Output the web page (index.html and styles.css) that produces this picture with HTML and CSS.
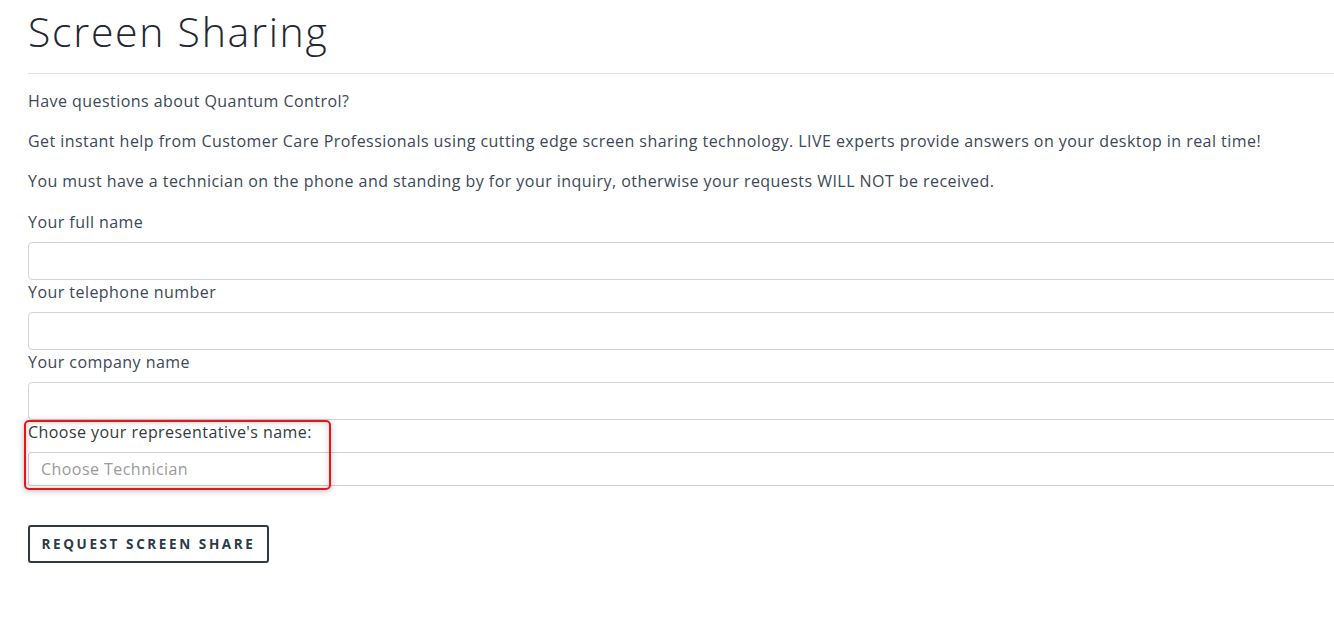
FILE: index.html
```html
<!DOCTYPE html>
<html lang="en">
<head>
<meta charset="utf-8">
<title>Screen Sharing</title>
<link rel="stylesheet" href="styles.css">
</head>
<body>
<main class="page">
  <h1 class="title">Screen Sharing</h1>
  <hr class="rule">
  <p class="text first">Have questions about Quantum Control?</p>
  <p class="text">Get instant help from Customer Care Professionals using cutting edge screen sharing technology. LIVE experts provide answers on your desktop in real time!</p>
  <p class="text">You must have a technician on the phone and standing by for your inquiry, otherwise your requests WILL NOT be received.</p>
  <form class="form">
    <label class="label" for="fullname">Your full name</label>
    <input class="field" id="fullname" type="text">
    <label class="label" for="phone">Your telephone number</label>
    <input class="field" id="phone" type="text">
    <label class="label" for="company">Your company name</label>
    <input class="field" id="company" type="text">
    <div class="rep-group">
      <label class="label label-dark" for="rep">Choose your representative's name:</label>
      <select class="select" id="rep">
        <option>Choose Technician</option>
      </select>
      <span class="highlight"></span>
    </div>
    <button class="btn" type="button">Request Screen Share</button>
  </form>
</main>
</body>
</html>
```

FILE: styles.css
```css
html, body {
  margin: 0;
  padding: 0;
  overflow: hidden;
  background: #fff;
}
body {
  font-family: "Open Sans", "Liberation Sans", sans-serif;
  color: #3b4858;
}
.page {
  width: 1320px;
  padding: 0 0 0 28px;
  display: flex;
  flex-direction: column;
}
.title {
  margin: 6px 0 0 0;
  font-size: 41px;
  line-height: 50px;
  font-weight: 300;
  color: #1f2832;
  letter-spacing: 1.7px;
}
.rule {
  margin: 17px 0 0 0;
  border: 0;
  border-top: 1px solid #e5e5e5;
  height: 0;
}
.text {
  margin: 16px 0 0 0;
  font-size: 16px;
  line-height: 24px;
  letter-spacing: 0.45px;
}
.text.first {
  margin-top: 15px;
}
.form {
  display: flex;
  flex-direction: column;
  margin-top: 17px;
}
.label {
  display: block;
  font-size: 16px;
  line-height: 24px;
  letter-spacing: 0.45px;
  margin-bottom: 8px;
}
.label-dark {
  color: #333a42;
}
.field {
  height: 38px;
  box-sizing: border-box;
  border: 1px solid #ced4da;
  border-radius: 4px;
  padding: 6px 12px;
  font: inherit;
  width: 100%;
  margin: 0;
}
.rep-group {
  position: relative;
  display: flex;
  flex-direction: column;
}
.select {
  height: 34px;
  box-sizing: border-box;
  border: 1px solid #cfcfcf;
  border-radius: 3px;
  padding: 0 12px;
  font-family: inherit;
  font-size: 16px;
  letter-spacing: 0.45px;
  color: #9a9a9a;
  background: #fff;
  -webkit-appearance: none;
  appearance: none;
  width: 100%;
  margin: 0;
}
.highlight {
  position: absolute;
  left: -4px;
  top: 0;
  width: 303px;
  height: 66px;
  border: 2px solid #e8141c;
  border-radius: 5px;
  box-shadow: 0 1px 6px rgba(0, 0, 0, 0.25), inset 0 0 6px rgba(0, 0, 0, 0.2);
  pointer-events: none;
}
.btn {
  align-self: flex-start;
  margin-top: 39px;
  height: 38px;
  width: 241px;
  box-sizing: border-box;
  background: #fff;
  border: 2px solid #2b3a48;
  border-radius: 3px;
  color: #2b3a48;
  font-family: "Open Sans", "Liberation Sans", sans-serif;
  font-weight: 700;
  font-size: 13.5px;
  letter-spacing: 2.6px;
  text-transform: uppercase;
  padding: 0;
}
```
